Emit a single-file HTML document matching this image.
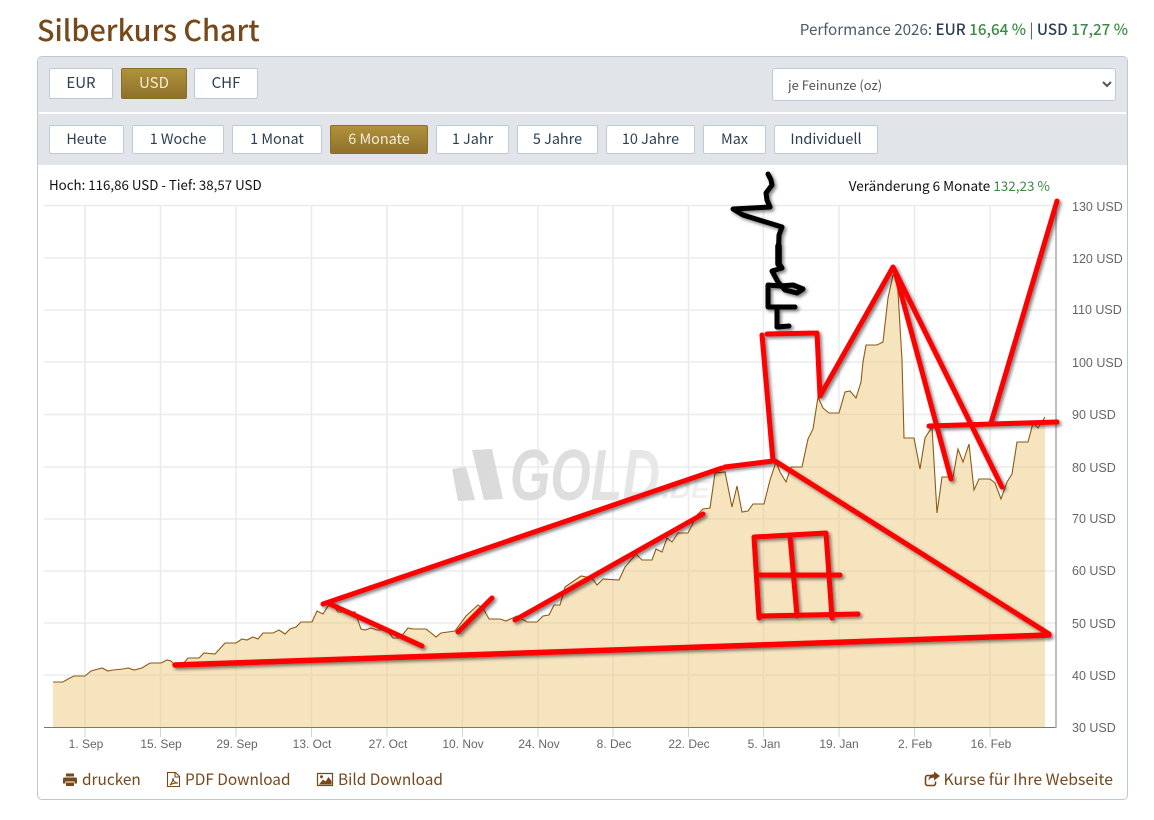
<!DOCTYPE html>
<html lang="de"><head><meta charset="utf-8"><title>Silberkurs Chart</title>
<style>
html,body{margin:0;padding:0;background:#fff}
body{width:1154px;height:820px;position:relative;overflow:hidden;font-family:"Noto Sans CJK JP","Liberation Sans",sans-serif;color:#2c3e50}
.a{position:absolute;white-space:nowrap}
.b{position:absolute;box-sizing:border-box;background:#fff;border:1px solid #bccbd8;border-radius:2px;text-align:center;font-size:14.4px;color:#2c3e50;white-space:nowrap}
.r1{top:68px;height:31px;line-height:28px;font-size:15px}
.r2{top:125px;height:29px;line-height:26px}
.on{background:linear-gradient(#af9239,#8f712c);border-color:#8b6d2a;color:#f4ecd8}
.f{top:767px;font-size:15.4px;line-height:24px;color:#77481a}
svg{position:absolute;left:0;top:0}
select{position:absolute;left:772px;top:68px;width:344px;height:33px;box-sizing:border-box;background:#fff;border:1px solid #bccbd8;border-radius:3px;font:13px "Noto Sans CJK JP","Liberation Sans",sans-serif;color:#555;padding-left:11px;outline:0}
</style></head><body>
<div class="a" style="left:37px;top:9px;font-size:28.8px;line-height:42px;font-weight:500;color:#77481a">Silberkurs Chart</div>
<div class="a" style="right:26px;top:18px;font-size:15.2px;line-height:23px;color:#4d5b68">Performance 2026: <b style="font-weight:500;color:#2c3e50">EUR</b> <span style="color:#3d8a45;font-weight:500">16,64 %</span> | <b style="font-weight:500;color:#2c3e50">USD</b> <span style="color:#3d8a45;font-weight:500">17,27 %</span></div>
<div class="a" style="left:37px;top:56px;width:1089px;height:742px;border:1px solid #bcc8d4;border-radius:5px;box-sizing:content-box"></div>
<div class="a" style="left:38px;top:57px;width:1089px;height:108px;background:#e1e5e9;border-radius:4px 4px 0 0"></div>
<div class="a" style="left:39px;top:112px;width:1087px;height:2px;background:#fff"></div>
<div class="b r1" style="left:49px;width:64px">EUR</div>
<div class="b r1 on" style="left:121px;width:66px">USD</div>
<div class="b r1" style="left:194px;width:64px">CHF</div>
<select><option>je Feinunze (oz)</option></select>
<div class="b r2" style="left:49px;width:75px">Heute</div>
<div class="b r2" style="left:132px;width:92px">1 Woche</div>
<div class="b r2" style="left:232px;width:90px">1 Monat</div>
<div class="b r2 on" style="left:330px;width:98px">6 Monate</div>
<div class="b r2" style="left:436px;width:73px">1 Jahr</div>
<div class="b r2" style="left:517px;width:81px">5 Jahre</div>
<div class="b r2" style="left:606px;width:89px">10 Jahre</div>
<div class="b r2" style="left:703px;width:63px">Max</div>
<div class="b r2" style="left:774px;width:104px">Individuell</div>
<div class="a" style="left:49px;top:175px;font-size:13.3px;line-height:20px;color:#111">Hoch: 116,86 USD - Tief: 38,57 USD</div>
<div class="a" style="right:104px;top:175px;font-size:13.5px;line-height:20px;color:#111">Veränderung 6 Monate <span style="color:#3d8a45">132,23 %</span></div>

<svg width="1154" height="820" viewBox="0 0 1154 820" style="pointer-events:none">
<defs>
<linearGradient id="wm" x1="450" x2="712" y1="0" y2="0" gradientUnits="userSpaceOnUse"><stop offset="0" stop-color="#d9d9d9"/><stop offset=".45" stop-color="#dedede"/><stop offset=".8" stop-color="#e9e9e9"/><stop offset="1" stop-color="#f2f2f2"/></linearGradient>
<filter id="sh" x="0" y="0" width="1154" height="820" filterUnits="userSpaceOnUse"><feDropShadow dx="2" dy="2" stdDeviation="1.5" flood-color="#000" flood-opacity=".5"/></filter>
</defs>
<g stroke="#ebebeb" stroke-width="1.6" fill="none">
<path d="M44 205.500H1056M44 258H1056M44 310H1056M44 362H1056M44 414.500H1056M44 467H1056M44 519H1056M44 571H1056M44 623H1056M44 675H1056"/>
<path d="M85 205V727M160.500 205V727M236 205V727M311.500 205V727M387 205V727M462.500 205V727M538 205V727M613 205V727M688.500 205V727M763.500 205V727M839 205V727M914.500 205V727M990 205V727"/>
</g>
<g fill="url(#wm)">
<path d="M452 469L466 467L475 500L458 501Z"/><path d="M472 450L492 449L503 499L484 500Z"/>
<text x="510" y="500" font-family="Liberation Sans" font-weight="700" font-style="italic" font-size="72" textLength="150" lengthAdjust="spacingAndGlyphs">GOLD</text>
<text x="662" y="498" font-family="Liberation Sans" font-weight="700" font-style="italic" font-size="25" textLength="48" lengthAdjust="spacingAndGlyphs">.DE</text>
</g>
<path id="area" fill="#edc980" fill-opacity=".5" d="M53 727V682L63 682 68 679 74 676 85 676 91 671 102 668 108 671 113 670 123 669 128 668 134 670 142 668 150 663 161 663 167 660 171 661 174 664 183 664 188 658 199 658 204 653 215 654 225 643 236 643 242 639 247 640 253 637 258 639 263 633 273 633 279 630 285 634 290 629 296 627 301 622 312 622 317 611 323 614 328 606 333 605 338 612 355 612 361 629 365 630 371 628 377 630 387 630 393 638 400 638 408 628 413 629 426 629 430 632 436 637 441 633 455 631 466 616 478 605 483 608 489 619 500 619 506 621 517 616 527 622 537 622 543 616 549 615 554 605 560 605 565 587 581 576 592 578 597 585 603 579 619 580 625 567 636 554 642 560 652 560 656 549 662 552 667 538 672 542 678 533 688 533 697 515 703 509 710 508 715 473 725 472 732 507 737 486 742 512 748 511 753 504 764 504 770 480 776 462 780 472 786 482 791 467 802 467 808 439 813 429 818 397 823 408 829 413 839 413 845 392 850 391 856 398 861 382 863 362 866 345 877 345 883 342 888 298 893 275 897 275 902 360 904 438 914 438 920 469 925 438 932 427 937 513 942 477 948 477 953 477 958 449 963 462 969 444 974 490 979 479 990 479 995 483 1001 499 1007 482 1012 474 1017 442 1028 442 1033 423 1038 428 1045 417V727Z"/>
<path fill="none" stroke="#8f5a14" stroke-width="1.100" d="M53 682L63 682 68 679 74 676 85 676 91 671 102 668 108 671 113 670 123 669 128 668 134 670 142 668 150 663 161 663 167 660 171 661 174 664 183 664 188 658 199 658 204 653 215 654 225 643 236 643 242 639 247 640 253 637 258 639 263 633 273 633 279 630 285 634 290 629 296 627 301 622 312 622 317 611 323 614 328 606 333 605 338 612 355 612 361 629 365 630 371 628 377 630 387 630 393 638 400 638 408 628 413 629 426 629 430 632 436 637 441 633 455 631 466 616 478 605 483 608 489 619 500 619 506 621 517 616 527 622 537 622 543 616 549 615 554 605 560 605 565 587 581 576 592 578 597 585 603 579 619 580 625 567 636 554 642 560 652 560 656 549 662 552 667 538 672 542 678 533 688 533 697 515 703 509 710 508 715 473 725 472 732 507 737 486 742 512 748 511 753 504 764 504 770 480 776 462 780 472 786 482 791 467 802 467 808 439 813 429 818 397 823 408 829 413 839 413 845 392 850 391 856 398 861 382 863 362 866 345 877 345 883 342 888 298 893 275 897 275 902 360 904 438 914 438 920 469 925 438 932 427 937 513 942 477 948 477 953 477 958 449 963 462 969 444 974 490 979 479 990 479 995 483 1001 499 1007 482 1012 474 1017 442 1028 442 1033 423 1038 428 1045 417"/>
<path stroke="#777" stroke-width="1" d="M44 727.500H1056.500"/><path stroke="#aaa" stroke-width="1.500" d="M1056 205V728"/>
<path stroke="#ccd6eb" stroke-width="1" d="M85 728V737M160.500 728V737M236 728V737M311.500 728V737M387 728V737M462.500 728V737M538 728V737M613 728V737M688.500 728V737M763.500 728V737M839 728V737M914.500 728V737M990 728V737"/>
<g font-family="Liberation Sans" font-size="12.500" fill="#666">
<text x="1072" y="211">130 USD</text><text x="1072" y="263">120 USD</text><text x="1072" y="314">110 USD</text><text x="1072" y="367">100 USD</text><text x="1072" y="419">90 USD</text><text x="1072" y="472">80 USD</text><text x="1072" y="523">70 USD</text><text x="1072" y="575">60 USD</text><text x="1072" y="628">50 USD</text><text x="1072" y="680">40 USD</text><text x="1072" y="732">30 USD</text>
</g>
<g font-family="Liberation Sans" font-size="12" fill="#666" text-anchor="middle">
<text x="86" y="748">1. Sep</text><text x="161" y="748">15. Sep</text><text x="237" y="748">29. Sep</text><text x="312" y="748">13. Oct</text><text x="388" y="748">27. Oct</text><text x="463" y="748">10. Nov</text><text x="539" y="748">24. Nov</text><text x="614" y="748">8. Dec</text><text x="689" y="748">22. Dec</text><text x="764" y="748">5. Jan</text><text x="839" y="748">19. Jan</text><text x="915" y="748">2. Feb</text><text x="991" y="748">16. Feb</text>
</g>
<g fill="none" stroke-linecap="round" stroke-linejoin="round" filter="url(#sh)">
<path stroke="#000" stroke-width="5" d="M768 174L771 180 772 185 766 193 767 200 770 207 733 209 743 215 782 227 779 235 778 262 782 268 772 271 778 282 785 290 797 293 803 289 793 285 780 286 768 285 768 307 795 307M777 307L777 327 789 326"/>
<path stroke="#000" stroke-width="6.500" d="M778.500 246L778.500 264"/>
<path stroke="#f00" stroke-width="5.500" d="M175 665L1049 635"/>
<path stroke="#f00" stroke-width="5" d="M1049 634L775 461M323 604L722 468M330 604L422 646M458 632L492 598M515 620L703 514M725 467L773 461M773 461L762 335M767 334L817 333M817 333L820 396M820 396L893 267M893 267L1002 487M896 275L951 479M929 426L1057 422M991 423L1057 201M754 537L826 533M826 533L832 618M754 537L759 618M759 616L858 614M790 536L797 616M760 575L840 575"/>
</g>
<g fill="#77481a">
<path d="M66 773.500h8v3h-8zM64.500 777.500h11a1.500 1.500 0 0 1 1.500 1.500v4.500h-2.500v-2H65.500v2H63V779a1.500 1.500 0 0 1 1.500-1.500zM66 782.500h8v3.500h-8z"/>
<path fill="none" stroke="#77481a" stroke-width="1.100" d="M167.500 772.500h8l4 4v10h-12zM175 772.500v4.500h4.500M170 785c2-2 3-5 3-7 0 3 2 5 5 5-3 0-6 .5-8 2z"/>
<path fill="none" stroke="#77481a" stroke-width="1.200" d="M317.500 773.500h15v12h-15z"/>
<path d="M319 784.500l4-5 2.500 2 3-4.500 3 4v3.500z"/><circle cx="321.500" cy="776.800" r="1.500"/>
<path fill="none" stroke="#77481a" stroke-width="1.600" d="M933 775.500h-5.500a2 2 0 0 0-2 2v6a2 2 0 0 0 2 2h6a2 2 0 0 0 2-2v-2"/>
<path d="M934 771.500l6 4.500-6 4.500v-2.700c-3 0-4.500 1-5.500 3 0-4 2-6.500 5.500-6.800z"/>
</g>
</svg>
<div class="a f" style="left:82px">drucken</div>
<div class="a f" style="left:185px">PDF Download</div>
<div class="a f" style="left:338px">Bild Download</div>
<div class="a f" style="right:41px;font-size:15.8px">Kurse für Ihre Webseite</div>
</body></html>
